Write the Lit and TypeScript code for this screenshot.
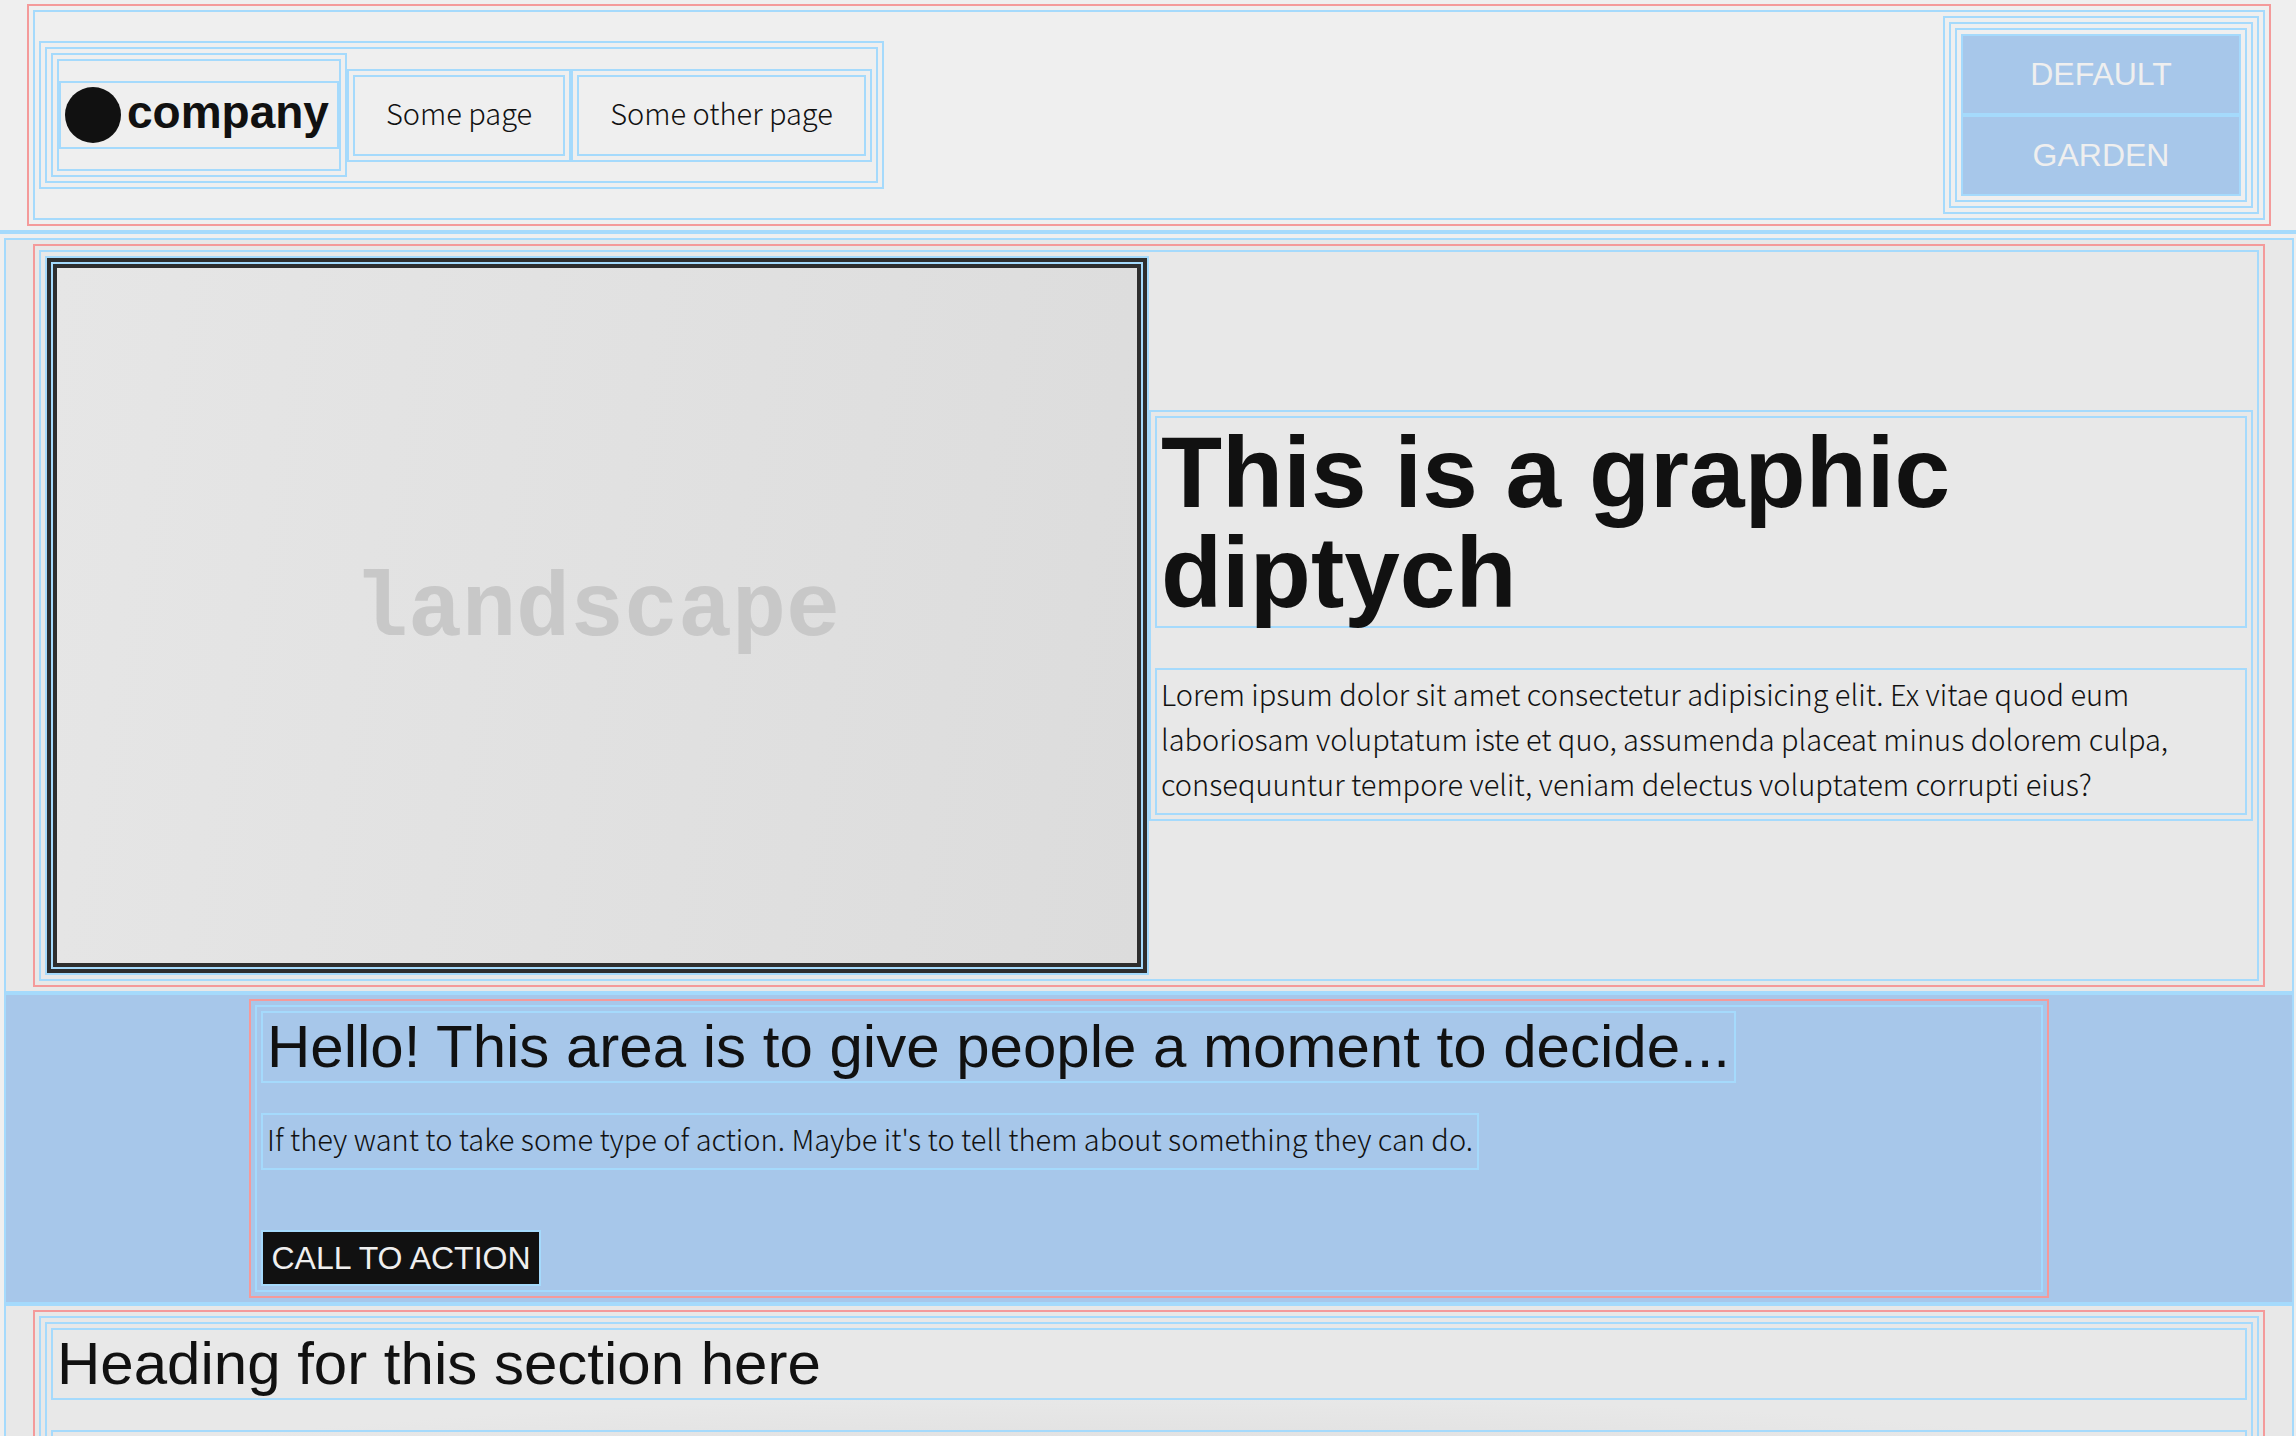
import { LitElement, html, css } from "lit";
import { customElement } from "lit/decorators.js";

const NAV = ["Some page", "Some other page"];
const THEMES = ["Default", "Garden"];

@customElement("app-root")
export class AppRoot extends LitElement {
  static styles = css`
    :host {
      --ink: #111111;
      --paper: #efefef;
      --panel: #e8e8e8;
      --accent: #a7c7ea;
      --outline: #a5dafc;
      --inner-outline: #f49a9a;
      --frame: #2e2e2e;
      display: block;
      height: 100vh;
      overflow: hidden;
      background: var(--paper);
      color: var(--ink);
      font: 300 29px/45px "Noto Sans CJK SC", "Noto Sans", sans-serif;
    }
    * {
      box-sizing: border-box;
      margin: 0;
    }
    .box {
      border: 2px solid var(--outline);
      padding: 4px;
    }
    .text {
      padding: 1px 4px 7px;
    }
    .inner {
      border: 2px solid var(--inner-outline);
      padding: 4px;
    }
    .site-header {
      border-bottom: 2px solid var(--outline);
      padding: 4px 25px 4px 27px;
    }
    .masthead {
      display: flex;
      justify-content: space-between;
      align-items: center;
    }
    .menu {
      display: flex;
      align-items: center;
      list-style: none;
    }
    a {
      color: inherit;
      text-decoration: none;
    }
    .home {
      display: block;
      border: 2px solid var(--outline);
      padding: 20px 0;
    }
    .logo {
      display: flex;
      align-items: flex-start;
      gap: 6px;
      width: 280px;
      height: 68px;
      font: 700 46px/50px "Liberation Sans", Arial, sans-serif;
    }
    .dot {
      flex: none;
      width: 56px;
      height: 56px;
      fill: var(--ink);
    }
    .link {
      display: block;
      border: 2px solid var(--outline);
      padding: 13px 31px 19px;
    }
    .themes {
      width: 292px;
      display: grid;
    }
    .button {
      border: 2px solid var(--outline);
      background: var(--accent);
      color: var(--paper);
      padding: 16px;
      font: 400 32px/45px "Liberation Sans", Arial, sans-serif;
      text-transform: uppercase;
      text-align: center;
      cursor: pointer;
    }
    main {
      border-top: 2px solid var(--outline);
      padding: 4px 2px 4px 4px;
    }
    .section {
      background: var(--panel);
    }
    .shaded {
      background: radial-gradient(52% 110px at 50% 200px, #d8d8d8, var(--panel));
    }
    .page > .inner {
      margin: 0 23px;
    }
    .diptych {
      display: grid;
      grid-template-columns: 1fr 1fr;
      align-items: center;
    }
    .picture,
    .image {
      background: var(--frame);
    }
    .placeholder {
      display: grid;
      place-items: center;
      aspect-ratio: 216 / 139;
      padding-bottom: 10px;
      background: linear-gradient(100deg, #e6e6e6, #dcdcdc);
      color: #c8c8c8;
      font: 700 90px/100px "Liberation Mono", "Courier New", monospace;
    }
    .copy {
      display: grid;
      gap: 40px;
    }
    h1 {
      font: 700 100px/100px "Liberation Sans", Arial, sans-serif;
    }
    h2 {
      font: 400 60px/60px "Liberation Sans", Arial, sans-serif;
    }
    .callout {
      background: var(--accent);
    }
    .callout > .inner {
      max-width: 1800px;
      margin: 0 auto;
    }
    .stack {
      display: grid;
      gap: 30px;
      justify-items: start;
    }
    .action {
      margin-top: 30px;
      min-width: 280px;
      padding: 4px;
      line-height: 44px;
      background: var(--ink);
    }
    .teasers {
      display: grid;
      gap: 30px;
    }
    .teaser {
      min-height: 300px;
    }
  `;

  render() {
    return html`
      <header class="site-header">
        <div class="inner">
          <div class="box masthead">
            <nav class="box">
              <ul class="box menu">
                <li class="box">
                  <a class="home" href="#">
                    <span class="box logo">
                      <svg class="dot" viewBox="0 0 56 56" aria-hidden="true">
                        <circle cx="28" cy="28" r="28" />
                      </svg>
                      company
                    </span>
                  </a>
                </li>
                ${NAV.map(
                  (label) => html`<li class="box"><a class="link" href="#">${label}</a></li>`
                )}
              </ul>
            </nav>
            <div class="box">
              <div class="box">
                <div class="box themes">
                  ${THEMES.map(
                    (label) => html`<button class="button" type="button">${label}</button>`
                  )}
                </div>
              </div>
            </div>
          </div>
        </div>
      </header>
      <main>
        <section class="box section page">
          <div class="inner">
            <div class="box diptych">
              <div class="box picture">
                <div class="box image">
                  <div class="placeholder">landscape</div>
                </div>
              </div>
              <div class="box copy">
                <h1 class="box">This is a graphic diptych</h1>
                <p class="box text">
                  Lorem ipsum dolor sit amet consectetur adipisicing elit. Ex vitae quod eum
                  laboriosam voluptatum iste et quo, assumenda placeat minus dolorem culpa,
                  consequuntur tempore velit, veniam delectus voluptatem corrupti eius?
                </p>
              </div>
            </div>
          </div>
        </section>
        <section class="box callout">
          <div class="inner">
            <div class="box stack">
              <h2 class="box">Hello! This area is to give people a moment to decide...</h2>
              <p class="box text">
                If they want to take some type of action. Maybe it's to tell them about something
                they can do.
              </p>
              <a class="button action" href="#">Call to action</a>
            </div>
          </div>
        </section>
        <section class="box section page shaded">
          <div class="inner">
            <div class="box">
              <div class="box teasers">
                <h2 class="box">Heading for this section here</h2>
                <div class="box teaser"></div>
              </div>
            </div>
          </div>
        </section>
      </main>
    `;
  }
}
